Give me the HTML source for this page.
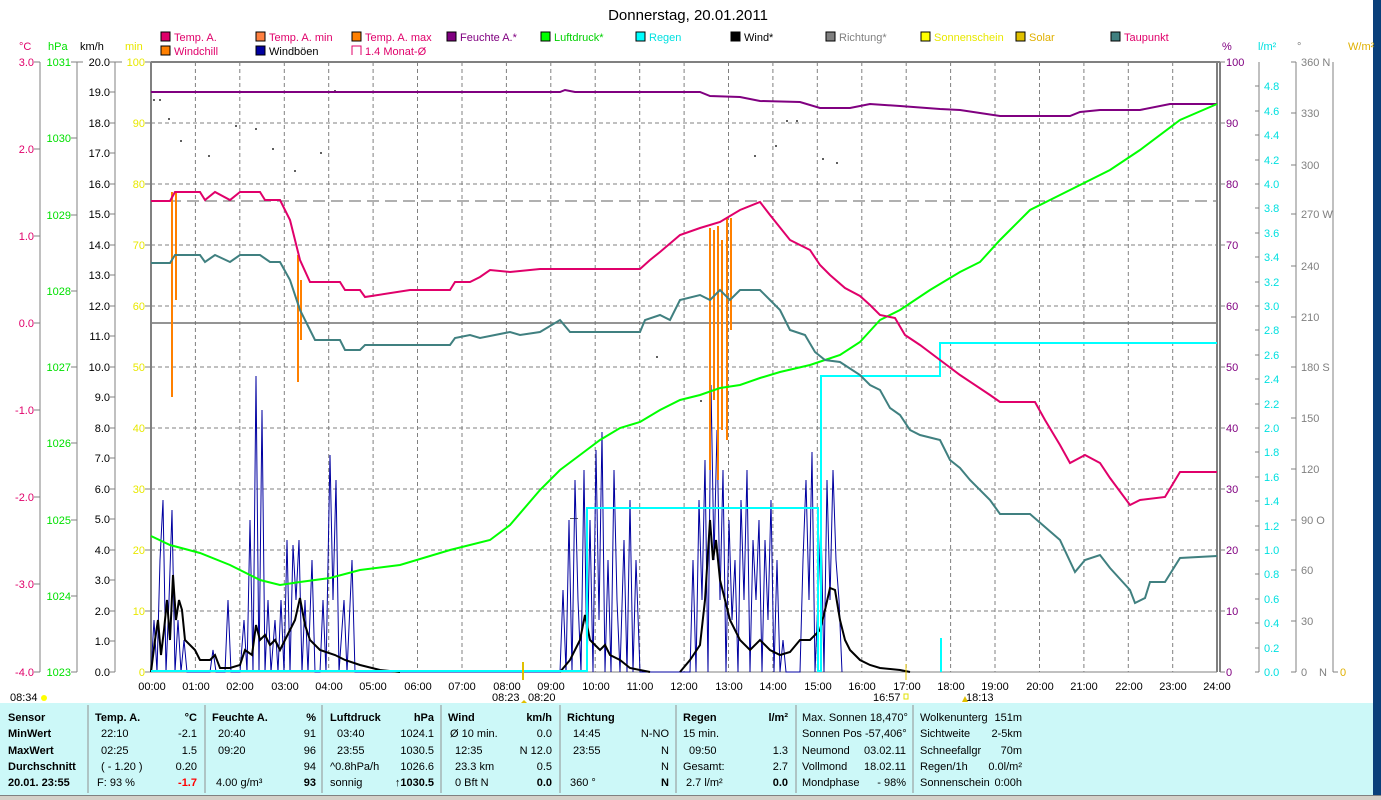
<!DOCTYPE html>
<html><head><meta charset="utf-8"><style>
html,body{margin:0;padding:0;background:#fff;width:1381px;height:800px;overflow:hidden}
svg{display:block;font-family:"Liberation Sans",sans-serif}
</style></head><body>
<svg width="1381" height="800" viewBox="0 0 1381 800" xmlns="http://www.w3.org/2000/svg">
<rect x="0" y="0" width="1381" height="800" fill="#fff"/>
<rect x="1373" y="0" width="8" height="703" fill="#0a3f7a"/>
<text x="688" y="20" font-size="15" text-anchor="middle">Donnerstag, 20.01.2011</text>
<!-- legend -->
<g font-size="11">
<rect x="161" y="32" width="9" height="9" fill="#e0006a" stroke="#000"/><text x="174" y="41" fill="#e0006a">Temp. A.</text>
<rect x="256" y="32" width="9" height="9" fill="#ff8040" stroke="#000"/><text x="269" y="41" fill="#e0006a">Temp. A. min</text>
<rect x="352" y="32" width="9" height="9" fill="#ff8000" stroke="#000"/><text x="365" y="41" fill="#e0006a">Temp. A. max</text>
<rect x="447" y="32" width="9" height="9" fill="#800080" stroke="#000"/><text x="460" y="41" fill="#800080">Feuchte A.*</text>
<rect x="541" y="32" width="9" height="9" fill="#00ff00" stroke="#000"/><text x="554" y="41" fill="#00d000">Luftdruck*</text>
<rect x="636" y="32" width="9" height="9" fill="#00ffff" stroke="#000"/><text x="649" y="41" fill="#00e0e0">Regen</text>
<rect x="731" y="32" width="9" height="9" fill="#000" stroke="#000"/><text x="744" y="41" fill="#000">Wind*</text>
<rect x="826" y="32" width="9" height="9" fill="#808080" stroke="#000"/><text x="839" y="41" fill="#808080">Richtung*</text>
<rect x="921" y="32" width="9" height="9" fill="#ffff00" stroke="#000"/><text x="934" y="41" fill="#e8e800">Sonnenschein</text>
<rect x="1016" y="32" width="9" height="9" fill="#e0c000" stroke="#000"/><text x="1029" y="41" fill="#e0b000">Solar</text>
<rect x="1111" y="32" width="9" height="9" fill="#408080" stroke="#000"/><text x="1124" y="41" fill="#e0006a">Taupunkt</text>
<rect x="161" y="46" width="9" height="9" fill="#ff8000" stroke="#000"/><text x="174" y="55" fill="#e0006a">Windchill</text>
<rect x="256" y="46" width="9" height="9" fill="#0000a0" stroke="#000"/><text x="269" y="55" fill="#000">Windböen</text>
<path d="M352,55 V46 H361 V55" fill="none" stroke="#e0006a"/><text x="365" y="55" fill="#e0006a">1.4 Monat-Ø</text>
</g>
<!-- units -->
<g font-size="11">
<text x="19" y="50" fill="#e0006a">°C</text>
<text x="48" y="50" fill="#00e000">hPa</text>
<text x="80" y="50">km/h</text>
<text x="125" y="50" fill="#e8e800">min</text>
<text x="1222" y="50" fill="#800080">%</text>
<text x="1258" y="50" fill="#00e0e0">l/m²</text>
<text x="1297" y="50" fill="#808080">°</text>
<text x="1348" y="50" fill="#e0b000">W/m²</text>
</g>
<!-- left axes -->
<g stroke="#808080" fill="none">
<line x1="40" y1="62" x2="40" y2="672"/><line x1="77" y1="62" x2="77" y2="672"/><line x1="115" y1="62" x2="115" y2="672"/>
<line x1="1259" y1="62" x2="1259" y2="672"/><line x1="1296" y1="62" x2="1296" y2="672"/><line x1="1333" y1="62" x2="1333" y2="672"/>
</g>
<g font-size="11" fill="#e0006a" text-anchor="end">
<text x="34" y="66">3.0</text><text x="34" y="153">2.0</text><text x="34" y="240">1.0</text><text x="34" y="327">0.0</text><text x="34" y="414">-1.0</text><text x="34" y="501">-2.0</text><text x="34" y="588">-3.0</text><text x="34" y="676">-4.0</text>
</g>
<g stroke="#808080"><path d="M34,62h6M34,149h6M34,236h6M34,323h6M34,410h6M34,497h6M34,584h6M34,672h6"/>
<path d="M71,62h12M71,138h6M71,215h6M71,291h6M71,367h6M71,443h6M71,520h6M71,596h6M71,672h6"/>
<path d="M110,62h12M110,92h5M110,123h5M110,153h5M110,184h5M110,214h5M110,245h5M110,275h5M110,306h5M110,336h5M110,367h5M110,397h5M110,428h5M110,458h5M110,489h5M110,519h5M110,550h5M110,580h5M110,611h5M110,641h5M110,672h5"/>
<path d="M145,62h6M145,123h6M145,184h6M145,245h6M145,306h6M145,367h6M145,428h6M145,489h6M145,550h6M145,611h6M145,672h6"/>
<path d="M1220,62h5M1220,123h5M1220,184h5M1220,245h5M1220,306h5M1220,367h5M1220,428h5M1220,489h5M1220,550h5M1220,611h5M1220,672h5"/>
<path d="M1255,86h4M1255,111h4M1255,135h4M1255,160h4M1255,184h4M1255,208h4M1255,233h4M1255,257h4M1255,282h4M1255,306h4M1255,330h4M1255,355h4M1255,379h4M1255,404h4M1255,428h4M1255,452h4M1255,477h4M1255,501h4M1255,526h4M1255,550h4M1255,574h4M1255,599h4M1255,623h4M1255,648h4M1255,672h4"/>
<path d="M1291,62h5M1291,113h5M1291,165h5M1291,214h5M1291,266h5M1291,317h5M1291,367h5M1291,418h5M1291,469h5M1291,520h5M1291,570h5M1291,621h5M1291,672h5"/>
<path d="M1333,672h5"/></g>
<g font-size="11" fill="#00e000" text-anchor="end">
<text x="71" y="66">1031</text><text x="71" y="142">1030</text><text x="71" y="219">1029</text><text x="71" y="295">1028</text><text x="71" y="371">1027</text><text x="71" y="447">1026</text><text x="71" y="524">1025</text><text x="71" y="600">1024</text><text x="71" y="676">1023</text>
</g>
<g font-size="11" fill="#000" text-anchor="end">
<text x="110" y="66">20.0</text><text x="110" y="96">19.0</text><text x="110" y="127">18.0</text><text x="110" y="157">17.0</text><text x="110" y="188">16.0</text><text x="110" y="218">15.0</text><text x="110" y="249">14.0</text><text x="110" y="279">13.0</text><text x="110" y="310">12.0</text><text x="110" y="340">11.0</text><text x="110" y="371">10.0</text><text x="110" y="401">9.0</text><text x="110" y="432">8.0</text><text x="110" y="462">7.0</text><text x="110" y="493">6.0</text><text x="110" y="523">5.0</text><text x="110" y="554">4.0</text><text x="110" y="584">3.0</text><text x="110" y="615">2.0</text><text x="110" y="645">1.0</text><text x="110" y="676">0.0</text>
</g>
<g font-size="11" fill="#e8e800" text-anchor="end">
<text x="145" y="66">100</text><text x="145" y="127">90</text><text x="145" y="188">80</text><text x="145" y="249">70</text><text x="145" y="310">60</text><text x="145" y="371">50</text><text x="145" y="432">40</text><text x="145" y="493">30</text><text x="145" y="554">20</text><text x="145" y="615">10</text><text x="145" y="676">0</text>
</g>
<g font-size="11" fill="#800080">
<text x="1226" y="66">100</text><text x="1226" y="127">90</text><text x="1226" y="188">80</text><text x="1226" y="249">70</text><text x="1226" y="310">60</text><text x="1226" y="371">50</text><text x="1226" y="432">40</text><text x="1226" y="493">30</text><text x="1226" y="554">20</text><text x="1226" y="615">10</text><text x="1226" y="676">0</text>
</g>
<g font-size="11" fill="#00e0e0">
<text x="1264" y="90">4.8</text><text x="1264" y="115">4.6</text><text x="1264" y="139">4.4</text><text x="1264" y="164">4.2</text><text x="1264" y="188">4.0</text><text x="1264" y="212">3.8</text><text x="1264" y="237">3.6</text><text x="1264" y="261">3.4</text><text x="1264" y="286">3.2</text><text x="1264" y="310">3.0</text><text x="1264" y="334">2.8</text><text x="1264" y="359">2.6</text><text x="1264" y="383">2.4</text><text x="1264" y="408">2.2</text><text x="1264" y="432">2.0</text><text x="1264" y="456">1.8</text><text x="1264" y="481">1.6</text><text x="1264" y="505">1.4</text><text x="1264" y="530">1.2</text><text x="1264" y="554">1.0</text><text x="1264" y="578">0.8</text><text x="1264" y="603">0.6</text><text x="1264" y="627">0.4</text><text x="1264" y="652">0.2</text><text x="1264" y="676">0.0</text>
</g>
<g font-size="11" fill="#808080">
<text x="1301" y="66">360 N</text><text x="1301" y="117">330</text><text x="1301" y="169">300</text><text x="1301" y="218">270 W</text><text x="1301" y="270">240</text><text x="1301" y="321">210</text><text x="1301" y="371">180 S</text><text x="1301" y="422">150</text><text x="1301" y="473">120</text><text x="1301" y="524">90 O</text><text x="1301" y="574">60</text><text x="1301" y="625">30</text><text x="1301" y="676">0</text><text x="1319" y="676">N</text>
</g>
<text x="1340" y="676" font-size="11" fill="#e0b000">0</text>
<!-- plot grid -->
<g stroke="#808080" stroke-dasharray="4,3" fill="none">
<path d="M195.4,62V672M239.8,62V672M284.3,62V672M328.7,62V672M373.1,62V672M417.5,62V672M462,62V672M506.4,62V672M550.8,62V672M595.2,62V672M639.7,62V672M684.1,62V672M728.5,62V672M772.9,62V672M817.3,62V672M861.8,62V672M906.2,62V672M950.6,62V672M995,62V672M1039.5,62V672M1083.9,62V672M1128.3,62V672M1172.7,62V672"/>
<path d="M151,123H1217M151,184H1217M151,245H1217M151,306H1217M151,367H1217M151,428H1217M151,489H1217M151,550H1217M151,611H1217"/>
</g>
<path d="M151,201H1217" stroke="#606060" stroke-dasharray="12,6"/>
<path d="M151,323H1217" stroke="#707070" stroke-width="1.5"/>
<path d="M151,62H1220M151,62V672" stroke="#808080" stroke-width="2" fill="none"/>
<path d="M1217,62V672M1220,62V672" stroke="#808080" stroke-width="2" fill="none"/>
<path d="M151,672H1217" stroke="#808080"/>
<!-- dots -->
<g fill="#606060">
<rect x="153" y="99" width="2" height="2"/><rect x="159" y="99" width="2" height="2"/><rect x="168" y="118" width="2" height="2"/><rect x="180" y="140" width="2" height="2"/><rect x="208" y="155" width="2" height="2"/><rect x="235" y="125" width="2" height="2"/><rect x="255" y="128" width="2" height="2"/><rect x="272" y="148" width="2" height="2"/><rect x="294" y="170" width="2" height="2"/><rect x="320" y="152" width="2" height="2"/><rect x="334" y="90" width="2" height="2"/><rect x="570" y="518" width="8" height="1"/><rect x="656" y="356" width="2" height="2"/><rect x="700" y="400" width="2" height="2"/><rect x="754" y="155" width="2" height="2"/><rect x="786" y="120" width="2" height="2"/><rect x="796" y="120" width="2" height="2"/><rect x="822" y="158" width="2" height="2"/><rect x="836" y="162" width="2" height="2"/><rect x="775" y="145" width="2" height="2"/>
</g>
<!-- windböen -->
<polyline fill="none" stroke="#0000a0" stroke-width="1" points="151,672 154,620 157,672 160,560 163,500 166,672 169,600 172,510 175,672 178,620 181,672 184,640 187,672 210,672 213,650 216,672 225,672 228,600 231,672 240,672 244,620 247,672 250,520 253,672 256,376 259,672 262,410 265,672 268,600 271,672 275,620 278,672 281,600 284,672 287,540 290,672 293,545 296,600 299,540 302,672 305,600 308,672 312,560 315,672 320,672 323,600 326,672 330,455 333,600 336,480 339,672 344,600 347,672 352,560 355,672 560,672 563,590 566,672 569,520 572,672 575,480 578,600 581,672 584,470 587,672 590,520 593,672 596,450 599,620 602,432 605,672 608,560 611,672 614,470 617,600 620,672 624,540 627,672 630,500 633,672 636,560 640,672 690,672 693,560 696,672 699,500 702,600 705,460 708,672 711,385 714,560 717,430 720,600 723,470 726,672 729,520 732,620 735,560 738,672 741,500 744,600 747,470 750,672 753,540 756,600 759,520 762,672 765,540 768,620 771,500 774,672 777,560 780,672 783,640 786,672 800,672 803,560 806,480 809,600 812,452 815,672 818,600 821,520 824,672 827,480 830,600 833,470 836,560 839,600 842,672"/>
<!-- wind -->
<polyline fill="none" stroke="#000" stroke-width="2" points="151,672 155,640 158,620 161,655 164,630 167,600 170,640 173,575 176,620 179,600 182,610 185,640 190,645 195,650 200,660 210,660 215,655 220,668 230,668 240,665 245,650 252,655 256,625 260,640 265,635 270,645 275,640 280,650 285,640 290,630 295,620 300,598 305,625 310,640 320,650 335,655 345,660 360,665 380,670 400,672"/>
<polyline fill="none" stroke="#000" stroke-width="2" points="560,672 570,660 580,640 585,615 590,640 600,650 605,645 610,655 620,660 630,668 640,670 650,672"/>
<polyline fill="none" stroke="#000" stroke-width="2" points="680,672 690,660 700,645 705,600 710,520 713,560 716,540 720,580 725,600 730,620 740,640 750,650 760,640 770,650 780,655 790,652 800,640 810,640 820,630 825,610 830,588 835,590 840,620 845,640 850,650 860,660 870,665 880,668 900,670 910,672"/>
<!-- regen -->
<path d="M151,671H587V508H818V671H821V376H940V343H1217" fill="none" stroke="#00ffff" stroke-width="2"/>
<path d="M587,672V620M941,672V638" stroke="#00ffff" stroke-width="2"/>
<!-- windchill spikes -->
<g stroke="#ff8000" stroke-width="2" fill="none">
<path d="M172,192V397M176,192V300"/><path d="M298,255V382M301,280V340"/>
<path d="M710,228V470M714,230V400M718,226V480M722,240V430M727,218V440M731,218V330"/>
</g>
<!-- feuchte -->
<polyline fill="none" stroke="#800080" stroke-width="2" points="151,92 560,92 565,90 575,92 700,92 710,96 740,97 760,101 800,102 820,108 850,108 870,104 900,106 940,109 960,110 1000,116 1070,116 1080,112 1100,110 1140,110 1170,104 1217,104"/>
<!-- luftdruck -->
<polyline fill="none" stroke="#00ff00" stroke-width="2" points="151,536 170,545 200,553 230,565 260,580 280,585 300,582 330,578 360,570 400,565 450,550 490,540 510,525 540,490 560,470 580,455 600,440 620,428 640,422 660,410 680,400 700,395 720,388 740,385 760,378 780,372 810,365 840,355 860,342 880,320 900,310 930,290 960,272 980,262 1000,240 1010,230 1030,210 1060,195 1080,185 1110,170 1140,150 1180,120 1217,104"/>
<!-- taupunkt -->
<polyline fill="none" stroke="#408080" stroke-width="2" points="151,263 170,263 175,255 200,255 205,262 215,255 230,262 240,255 260,255 270,262 280,262 290,280 300,310 315,340 340,340 345,350 360,350 365,345 450,345 455,338 470,335 480,338 510,332 520,335 540,332 560,320 570,332 640,332 645,320 660,315 670,320 680,300 700,295 710,300 720,290 730,300 740,290 760,290 770,300 780,310 790,330 805,335 815,352 825,360 840,362 860,375 870,385 880,390 890,408 900,415 910,430 920,435 940,440 950,460 960,468 970,480 990,500 1000,514 1030,514 1060,540 1075,572 1085,560 1100,555 1110,568 1130,590 1135,603 1145,598 1150,582 1165,582 1180,558 1217,556"/>
<!-- temp -->
<polyline fill="none" stroke="#e0006a" stroke-width="2" points="151,201 170,201 175,192 200,192 205,200 215,192 230,200 240,192 260,192 265,200 280,200 290,220 300,260 310,282 340,282 345,290 360,290 365,297 410,290 450,290 455,282 470,282 480,277 490,270 510,272 540,269 640,269 650,260 660,252 680,235 700,228 720,222 740,210 760,202 770,215 790,240 810,250 820,265 830,275 845,288 860,296 870,305 880,315 895,318 905,335 920,345 940,360 960,375 990,395 1000,402 1035,402 1045,420 1060,445 1070,463 1085,455 1100,463 1110,478 1130,505 1140,500 1165,497 1180,472 1217,472"/>
<!-- sun marks -->
<path d="M523,662V680" stroke="#e0c000" stroke-width="2"/>
<path d="M906,664V680" stroke="#e0c000" stroke-width="1"/>
<!-- time labels -->
<g font-size="11" text-anchor="middle">
<text x="152" y="690">00:00</text><text x="196" y="690">01:00</text><text x="240" y="690">02:00</text><text x="285" y="690">03:00</text><text x="329" y="690">04:00</text><text x="373" y="690">05:00</text><text x="418" y="690">06:00</text><text x="462" y="690">07:00</text><text x="507" y="690">08:00</text><text x="551" y="690">09:00</text><text x="596" y="690">10:00</text><text x="640" y="690">11:00</text><text x="684" y="690">12:00</text><text x="729" y="690">13:00</text><text x="773" y="690">14:00</text><text x="818" y="690">15:00</text><text x="862" y="690">16:00</text><text x="907" y="690">17:00</text><text x="951" y="690">18:00</text><text x="995" y="690">19:00</text><text x="1040" y="690">20:00</text><text x="1084" y="690">21:00</text><text x="1129" y="690">22:00</text><text x="1173" y="690">23:00</text><text x="1217" y="690">24:00</text>
</g>
<g font-size="11">
<text x="10" y="701">08:34</text><circle cx="44" cy="698" r="3" fill="#ffff00"/>
<text x="492" y="701">08:23</text><text x="528" y="701">08:20</text><path d="M524,700l-3,3h6z" fill="#e0c000"/>
<text x="873" y="701">16:57</text><rect x="904" y="694" width="4" height="5" fill="none" stroke="#e0e000"/>
<text x="966" y="701">18:13</text><path d="M962,702l3,-6l3,6z" fill="#e0c000"/>
</g>
<!-- table -->
<rect x="0" y="703" width="1373" height="92" fill="#ccf8f8"/>
<rect x="1373" y="703" width="8" height="92" fill="#0a3f7a"/>
<rect x="0" y="795" width="1381" height="5" fill="#d4d0c8"/>
<line x1="0" y1="795.5" x2="1381" y2="795.5" stroke="#808080"/>
<g stroke="#909090"><path d="M88,705V793M205,705V793M322,705V793M441,705V793M560,705V793M676,705V793M796,705V793M913,705V793"/></g>
<g font-size="11">
<g font-weight="bold"><text x="8" y="721">Sensor</text><text x="8" y="737">MinWert</text><text x="8" y="754">MaxWert</text><text x="8" y="770">Durchschnitt</text><text x="8" y="786">20.01. 23:55</text></g>
<text x="95" y="721" font-weight="bold">Temp. A.</text><text x="197" y="721" font-weight="bold" text-anchor="end">°C</text>
<text x="101" y="737">22:10</text><text x="197" y="737" text-anchor="end">-2.1</text>
<text x="101" y="754">02:25</text><text x="197" y="754" text-anchor="end">1.5</text>
<text x="101" y="770">( - 1.20 )</text><text x="197" y="770" text-anchor="end">0.20</text>
<text x="97" y="786">F: 93 %</text><text x="197" y="786" text-anchor="end" font-weight="bold" fill="#ff0000">-1.7</text>
<text x="212" y="721" font-weight="bold">Feuchte A.</text><text x="316" y="721" font-weight="bold" text-anchor="end">%</text>
<text x="218" y="737">20:40</text><text x="316" y="737" text-anchor="end">91</text>
<text x="218" y="754">09:20</text><text x="316" y="754" text-anchor="end">96</text>
<text x="316" y="770" text-anchor="end">94</text>
<text x="216" y="786">4.00 g/m³</text><text x="316" y="786" text-anchor="end" font-weight="bold">93</text>
<text x="330" y="721" font-weight="bold">Luftdruck</text><text x="434" y="721" font-weight="bold" text-anchor="end">hPa</text>
<text x="337" y="737">03:40</text><text x="434" y="737" text-anchor="end">1024.1</text>
<text x="337" y="754">23:55</text><text x="434" y="754" text-anchor="end">1030.5</text>
<text x="330" y="770">^0.8hPa/h</text><text x="434" y="770" text-anchor="end">1026.6</text>
<text x="330" y="786">sonnig</text><text x="434" y="786" text-anchor="end" font-weight="bold">↑1030.5</text>
<text x="448" y="721" font-weight="bold">Wind</text><text x="552" y="721" font-weight="bold" text-anchor="end">km/h</text>
<text x="450" y="737">Ø 10 min.</text><text x="552" y="737" text-anchor="end">0.0</text>
<text x="455" y="754">12:35</text><text x="552" y="754" text-anchor="end">N 12.0</text>
<text x="455" y="770">23.3 km</text><text x="552" y="770" text-anchor="end">0.5</text>
<text x="455" y="786">0 Bft N</text><text x="552" y="786" text-anchor="end" font-weight="bold">0.0</text>
<text x="567" y="721" font-weight="bold">Richtung</text>
<text x="573" y="737">14:45</text><text x="669" y="737" text-anchor="end">N-NO</text>
<text x="573" y="754">23:55</text><text x="669" y="754" text-anchor="end">N</text>
<text x="669" y="770" text-anchor="end">N</text>
<text x="570" y="786">360 °</text><text x="669" y="786" text-anchor="end" font-weight="bold">N</text>
<text x="683" y="721" font-weight="bold">Regen</text><text x="788" y="721" font-weight="bold" text-anchor="end">l/m²</text>
<text x="683" y="737">15 min.</text>
<text x="689" y="754">09:50</text><text x="788" y="754" text-anchor="end">1.3</text>
<text x="683" y="770">Gesamt:</text><text x="788" y="770" text-anchor="end">2.7</text>
<text x="686" y="786">2.7 l/m²</text><text x="788" y="786" text-anchor="end" font-weight="bold">0.0</text>
<text x="802" y="721">Max. Sonnen 18,470°</text>
<text x="802" y="737">Sonnen Pos  -57,406°</text>
<text x="802" y="754">Neumond</text><text x="906" y="754" text-anchor="end">03.02.11</text>
<text x="802" y="770">Vollmond</text><text x="906" y="770" text-anchor="end">18.02.11</text>
<text x="802" y="786">Mondphase</text><text x="906" y="786" text-anchor="end">- 98%</text>
<text x="920" y="721">Wolkenunterg</text><text x="1022" y="721" text-anchor="end">151m</text>
<text x="920" y="737">Sichtweite</text><text x="1022" y="737" text-anchor="end">2-5km</text>
<text x="920" y="754">Schneefallgr</text><text x="1022" y="754" text-anchor="end">70m</text>
<text x="920" y="770">Regen/1h</text><text x="1022" y="770" text-anchor="end">0.0l/m²</text>
<text x="920" y="786">Sonnenschein</text><text x="1022" y="786" text-anchor="end">0:00h</text>
</g>
</svg>
</body></html>
